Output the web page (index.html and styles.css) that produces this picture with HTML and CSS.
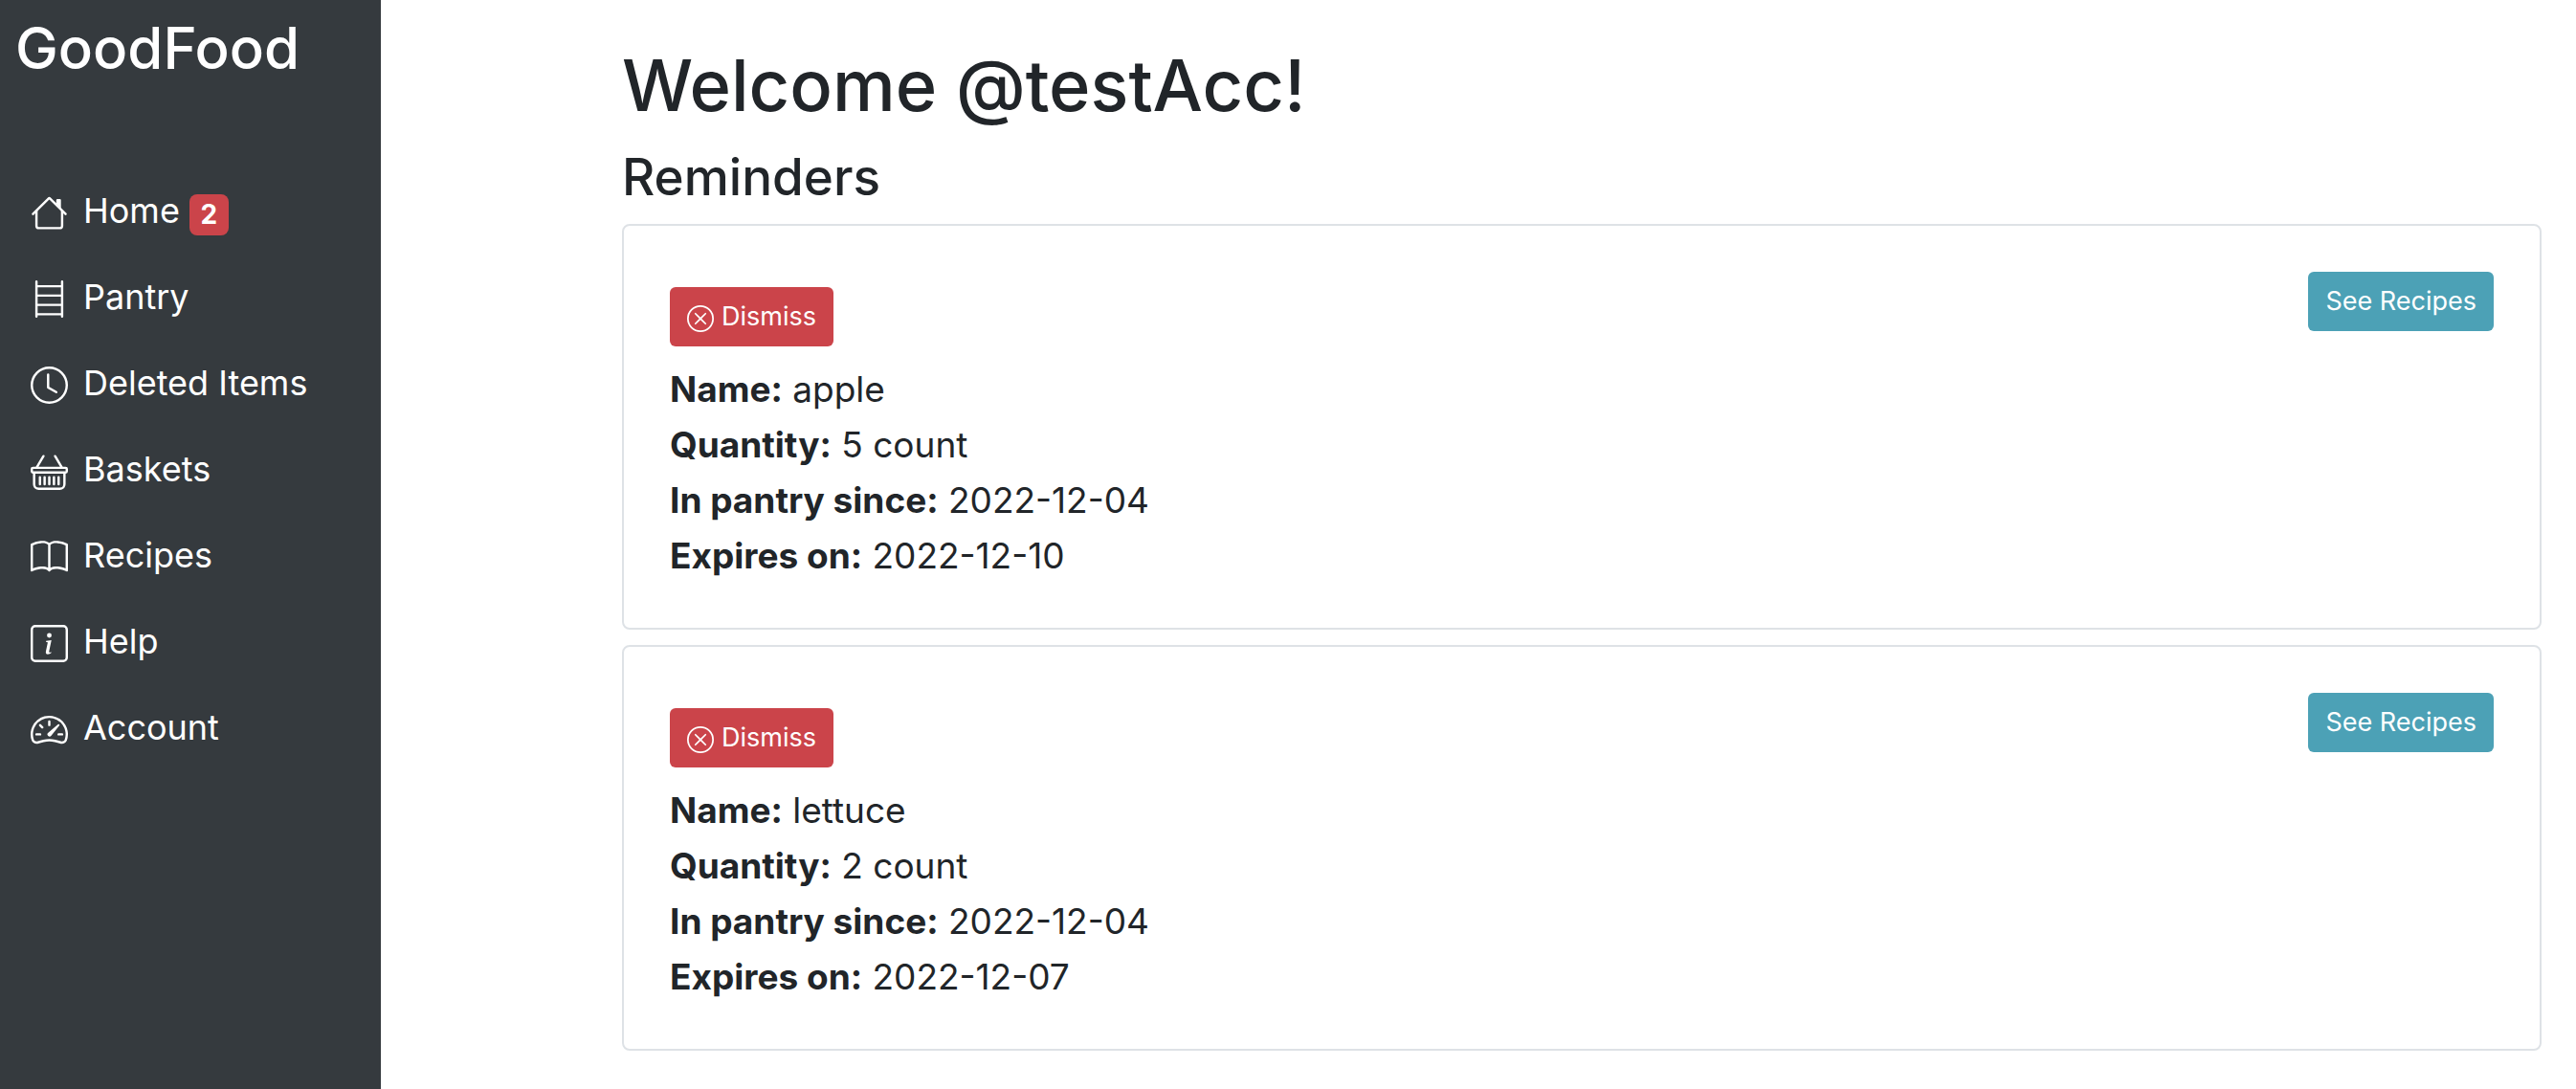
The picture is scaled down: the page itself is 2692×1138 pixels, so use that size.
FILE: index.html
```html
<!DOCTYPE html>
<html lang="en">
<head>
<meta charset="utf-8">
<meta name="viewport" content="width=device-width, initial-scale=1">
<title>GoodFood</title>
<link rel="stylesheet" href="styles.css">
</head>
<body>
<svg class="sprite" aria-hidden="true">
  <symbol id="house" viewBox="0 0 16 16"><path fill-rule="evenodd" d="M2 13.5V7h1v6.5a.5.5 0 0 0 .5.5h9a.5.5 0 0 0 .5-.5V7h1v6.5a1.5 1.5 0 0 1-1.5 1.5h-9A1.5 1.5 0 0 1 2 13.500zm11-11V6l-2-2V2.500a.5.5 0 0 1 .5-.5h1a.5.5 0 0 1 .5.5z"/><path fill-rule="evenodd" d="M7.293 1.5a1 1 0 0 1 1.414 0l6.647 6.646a.5.5 0 0 1-.708.708L8 2.207 1.354 8.854a.5.5 0 1 1-.708-.708L7.293 1.5z"/></symbol>
  <symbol id="shelf" viewBox="0 0 16 16"><path d="M2.500 0a.5.5 0 0 1 .5.5V2h10V.5a.5.5 0 0 1 1 0v15a.5.5 0 0 1-1 0V15H3v.5a.5.5 0 0 1-1 0V.5a.5.5 0 0 1 .5-.5zM3 14h10v-3H3v3zm0-4h10V7H3v3zm0-4h10V3H3v3z"/></symbol>
  <symbol id="clock" viewBox="0 0 16 16"><path d="M8 3.500a.5.5 0 0 0-1 0V9a.5.5 0 0 0 .252.434l3.500 2a.5.5 0 0 0 .496-.868L8 8.710V3.500z"/><path d="M8 16A8 8 0 1 0 8 0a8 8 0 0 0 0 16zm7-8A7 7 0 1 1 1 8a7 7 0 0 1 14 0z"/></symbol>
  <symbol id="basket" viewBox="0 0 16 16"><path d="M5.757 1.071a.5.5 0 0 1 .172.686L3.383 6h9.234L10.070 1.757a.5.5 0 1 1 .858-.514L13.783 6H15a1 1 0 0 1 1 1v1a1 1 0 0 1-1 1v4.500a2.500 2.500 0 0 1-2.500 2.500h-9A2.500 2.500 0 0 1 1 13.500V9a1 1 0 0 1-1-1V7a1 1 0 0 1 1-1h1.217L5.070 1.243a.5.5 0 0 1 .686-.172zM2 9v4.500A1.500 1.500 0 0 0 3.500 15h9a1.500 1.500 0 0 0 1.500-1.500V9H2zM1 7v1h14V7H1zm3 3a.5.5 0 0 1 .5.5v3a.5.5 0 0 1-1 0v-3A.5.5 0 0 1 4 10zm2 0a.5.5 0 0 1 .5.5v3a.5.5 0 0 1-1 0v-3A.5.5 0 0 1 6 10zm2 0a.5.5 0 0 1 .5.5v3a.5.5 0 0 1-1 0v-3A.5.5 0 0 1 8 10zm2 0a.5.5 0 0 1 .5.5v3a.5.5 0 0 1-1 0v-3a.5.5 0 0 1 .5-.5zm2 0a.5.5 0 0 1 .5.5v3a.5.5 0 0 1-1 0v-3a.5.5 0 0 1 .5-.5z"/></symbol>
  <symbol id="book" viewBox="0 0 16 16"><path d="M1 2.828c.885-.37 2.154-.769 3.388-.893 1.330-.134 2.458.063 3.112.752v9.746c-.935-.53-2.120-.603-3.213-.493-1.180.12-2.370.461-3.287.811V2.828zm7.500-.141c.654-.689 1.782-.886 3.112-.752 1.234.124 2.503.523 3.388.893v9.923c-.918-.35-2.107-.692-3.287-.81-1.094-.111-2.278-.039-3.213.492V2.687zM8 1.783C7.015.936 5.587.81 4.287.94c-1.514.153-3.042.672-3.994 1.105A.5.5 0 0 0 0 2.500v11a.5.5 0 0 0 .707.455c.882-.4 2.303-.881 3.680-1.020 1.409-.142 2.590.087 3.223.877a.5.5 0 0 0 .78 0c.633-.79 1.814-1.019 3.222-.877 1.378.139 2.800.62 3.681 1.020A.5.5 0 0 0 16 13.500v-11a.5.5 0 0 0-.293-.455c-.952-.433-2.480-.952-3.994-1.105C10.413.809 8.985.936 8 1.783z"/></symbol>
  <symbol id="info" viewBox="0 0 16 16"><path d="M14 1a1 1 0 0 1 1 1v12a1 1 0 0 1-1 1H2a1 1 0 0 1-1-1V2a1 1 0 0 1 1-1h12zM2 0a2 2 0 0 0-2 2v12a2 2 0 0 0 2 2h12a2 2 0 0 0 2-2V2a2 2 0 0 0-2-2H2z"/><path d="m8.930 6.588-2.290.287-.082.38.45.083c.294.07.352.176.288.469l-.738 3.468c-.194.897.105 1.319.808 1.319.545 0 1.178-.252 1.465-.598l.088-.416c-.2.176-.492.246-.686.246-.275 0-.375-.193-.304-.533L8.930 6.588zM9 4.500a1 1 0 1 1-2 0 1 1 0 0 1 2 0z"/></symbol>
  <symbol id="gauge" viewBox="0 0 16 16"><path d="M8 4a.5.5 0 0 1 .5.5V6a.5.5 0 0 1-1 0V4.500A.5.5 0 0 1 8 4zM3.732 5.732a.5.5 0 0 1 .707 0l.915.914a.5.5 0 1 1-.708.708l-.914-.915a.5.5 0 0 1 0-.707zM2 10a.5.5 0 0 1 .5-.5h1.586a.5.5 0 0 1 0 1H2.500A.5.5 0 0 1 2 10zm9.500 0a.5.5 0 0 1 .5-.5h1.500a.5.5 0 0 1 0 1H12a.5.5 0 0 1-.5-.5zm.754-4.246a.389.389 0 0 0-.527-.020L7.547 9.310a.91.91 0 1 0 1.302 1.258l3.434-4.297a.389.389 0 0 0-.029-.518z"/><path fill-rule="evenodd" d="M0 10a8 8 0 1 1 15.547 2.661c-.442 1.253-1.845 1.602-2.932 1.250C11.309 13.488 9.475 13 8 13c-1.474 0-3.310.488-4.615.911-1.087.352-2.490.003-2.932-1.250A7.988 7.988 0 0 1 0 10zm8-7a7 7 0 0 0-6.603 9.329c.203.575.923.876 1.680.63C4.397 12.533 6.358 12 8 12s3.604.532 4.923.96c.757.245 1.477-.056 1.680-.631A7 7 0 0 0 8 3z"/></symbol>
  <symbol id="x-circle" viewBox="0 0 16 16"><path d="M8 15A7 7 0 1 1 8 1a7 7 0 0 1 0 14zm0 1A8 8 0 1 0 8 0a8 8 0 0 0 0 16z"/><path d="M4.646 4.646a.5.5 0 0 1 .708 0L8 7.293l2.646-2.647a.5.5 0 0 1 .708.708L8.707 8l2.647 2.646a.5.5 0 0 1-.708.708L8 8.707l-2.646 2.647a.5.5 0 0 1-.708-.708L7.293 8 4.646 5.354a.5.5 0 0 1 0-.708z"/></symbol>
</svg>
<div class="layout">
  <aside class="sidebar">
    <a class="brand" href="#">GoodFood</a>
    <nav class="nav" aria-label="Main">
      <a class="nav-link" href="#"><svg class="nav-icon"><use href="#house"/></svg>Home<span class="badge">2</span></a>
      <a class="nav-link" href="#"><svg class="nav-icon"><use href="#shelf"/></svg>Pantry</a>
      <a class="nav-link" href="#"><svg class="nav-icon"><use href="#clock"/></svg>Deleted Items</a>
      <a class="nav-link" href="#"><svg class="nav-icon"><use href="#basket"/></svg>Baskets</a>
      <a class="nav-link" href="#"><svg class="nav-icon"><use href="#book"/></svg>Recipes</a>
      <a class="nav-link" href="#"><svg class="nav-icon"><use href="#info"/></svg>Help</a>
      <a class="nav-link" href="#"><svg class="nav-icon"><use href="#gauge"/></svg>Account</a>
    </nav>
  </aside>
  <main class="content">
    <h1 class="title">Welcome @testAcc!</h1>
    <h2 class="subtitle">Reminders</h2>
    <div class="reminders">
      <article class="card">
        <div class="details">
          <button class="btn btn-danger" type="button"><svg class="btn-icon"><use href="#x-circle"/></svg>Dismiss</button>
          <p class="line"><strong>Name:</strong> apple</p>
          <p class="line"><strong>Quantity:</strong> 5 count</p>
          <p class="line"><strong>In pantry since:</strong> 2022-12-04</p>
          <p class="line"><strong>Expires on:</strong> 2022-12-10</p>
        </div>
        <button class="btn btn-info" type="button">See Recipes</button>
      </article>
      <article class="card">
        <div class="details">
          <button class="btn btn-danger" type="button"><svg class="btn-icon"><use href="#x-circle"/></svg>Dismiss</button>
          <p class="line"><strong>Name:</strong> lettuce</p>
          <p class="line"><strong>Quantity:</strong> 2 count</p>
          <p class="line"><strong>In pantry since:</strong> 2022-12-04</p>
          <p class="line"><strong>Expires on:</strong> 2022-12-07</p>
        </div>
        <button class="btn btn-info" type="button">See Recipes</button>
      </article>
    </div>
  </main>
</div>
</body>
</html>
```

FILE: styles.css
```css
*, *::before, *::after { box-sizing: border-box; }

body {
  margin: 0;
  background: #fff;
  color: #212529;
  font-family: Inter, "Liberation Sans", sans-serif;
  font-size: 37px;
  line-height: 58px;
}

.sprite { display: none; }

svg { fill: currentColor; flex: none; }

.layout {
  display: flex;
  min-height: 100vh;
}

.sidebar {
  flex: none;
  width: 398px;
  padding: 11px 16px 32px;
  background: #353a3e;
  color: #fff;
}

.brand {
  display: block;
  color: inherit;
  font-size: 60px;
  font-weight: 500;
  line-height: 78px;
  text-decoration: none;
}

.nav {
  display: flex;
  flex-direction: column;
  gap: 32px;
  margin-top: 102px;
  padding: 0 16px;
  font-size: 36px;
}

.nav-link {
  display: flex;
  align-items: center;
  color: inherit;
  text-decoration: none;
  white-space: nowrap;
}

.nav-icon {
  width: 39px;
  height: 39px;
  margin: 4px 16px 0 0;
}

.badge {
  min-width: 41px;
  margin: 8px 0 0 10px;
  border-radius: 8px;
  background: #cb444a;
  font-size: 28px;
  font-weight: 700;
  line-height: 43px;
  text-align: center;
}

.content {
  flex: 1;
  min-width: 0;
  padding: 42px 36px 36px 252px;
}

.title, .subtitle {
  margin: 0;
  font-weight: 500;
}

.title {
  font-size: 74px;
  line-height: 94px;
}

.subtitle {
  margin: 16px 0;
  font-size: 53px;
  line-height: 66px;
}

.reminders {
  display: flex;
  flex-direction: column;
  gap: 16px;
}

.card {
  display: flex;
  align-items: flex-start;
  justify-content: space-between;
  padding: 48px 48px 46px;
  border: 2px solid #dee2e6;
  border-radius: 8px;
}

.details { padding-top: 16px; }

.line { margin: 0; }

.btn {
  display: inline-flex;
  align-items: center;
  justify-content: center;
  gap: 8px;
  padding: 10px 18px;
  border: 0;
  border-radius: 6px;
  color: #fff;
  font-family: inherit;
  font-size: 27px;
  line-height: 42px;
  white-space: nowrap;
}

.btn-danger {
  display: flex;
  margin-bottom: 16px;
  background: #cb444a;
}

.btn-info { background: #4ca1b6; }

.btn-icon {
  width: 28px;
  height: 28px;
  margin-top: 4px;
}
```
